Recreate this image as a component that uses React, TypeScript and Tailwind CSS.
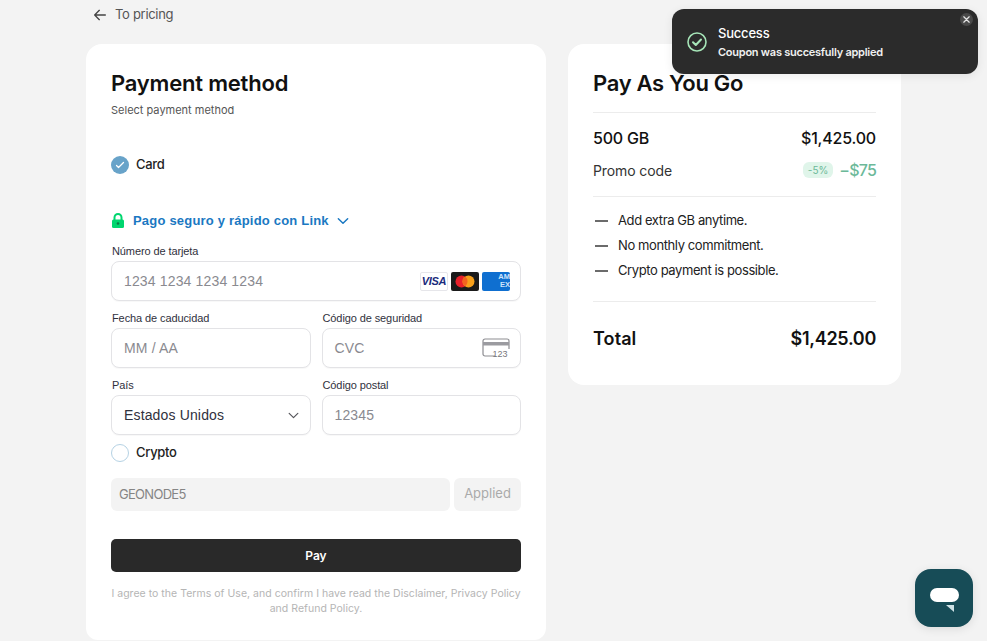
import React from "react";

const SANS = "font-['Inter','Noto_Sans',sans-serif]";
const ARIAL = "font-['Liberation_Sans',Arial,sans-serif]";

function Label({ children }: { children: React.ReactNode }) {
  return <div className={`${ARIAL} text-[11px] leading-[13px] text-[#30313d] mb-[3px] pl-[1px] tracking-[-0.1px]`}>{children}</div>;
}

function Field({ label, placeholder, children }: { label: string; placeholder: string; children?: React.ReactNode }) {
  return (
    <div className="flex-1 min-w-0">
      <Label>{label}</Label>
      <div className="h-[40px] rounded-[8px] border border-[#e3e3e6] bg-white flex items-center justify-between pl-[12px] pr-[11px] shadow-[0_1px_1px_rgba(0,0,0,0.03)]">
        <span className={`${ARIAL} text-[14px] text-[#8a8a90] tracking-[0.15px]`}>{placeholder}</span>
        {children}
      </div>
    </div>
  );
}

function Dash({ children }: { children: React.ReactNode }) {
  return (
    <div className="flex items-center h-[25px]">
      <span className="w-[13px] h-[2px] bg-[#6b6b6b] mr-[10px] ml-[2px]" />
      <span className="text-[13px] tracking-[-0.4px] text-[#222]">{children}</span>
    </div>
  );
}

export default function App() {
  return (
    <div className={`${SANS} relative w-[987px] h-[641px] overflow-hidden bg-[#f3f3f3]`}>
      <div className="pl-[86px] flex gap-[22px] items-start">
        <div className="w-[460px]">
          <div className="h-[44px] pb-[14px] flex items-center pl-[6px] gap-[7px]">
            <svg width="16" height="16" viewBox="0 0 24 24" fill="none" stroke="#444" strokeWidth="2" strokeLinecap="round" strokeLinejoin="round">
              <path d="M20 12H4M11 5l-7 7 7 7" />
            </svg>
            <span className="text-[13px] tracking-[-0.3px] text-[#555]">To pricing</span>
          </div>

          <div className="h-[596px] rounded-t-[16px] rounded-b-[12px] bg-white px-[25px] pt-[25px]">
            <h1 className="text-[22px] leading-[28px] font-semibold tracking-[-0.2px] text-[#111]">Payment method</h1>
            <p className="mt-[6px] text-[11px] leading-[14px] text-[#555]">Select payment method</p>

            <div className="mt-[38px] flex items-center gap-[7px] h-[20px]">
              <span className="w-[18px] h-[18px] rounded-full bg-[#68a3c9] flex items-center justify-center">
                <svg width="12" height="12" viewBox="0 0 24 24" fill="none" stroke="#fff" strokeWidth="2.5" strokeLinecap="round" strokeLinejoin="round">
                  <path d="M5 13l4 4L19 7" />
                </svg>
              </span>
              <span className="text-[13px] font-medium tracking-[-0.3px] text-[#222]">Card</span>
            </div>

            <div className="mt-[36px] flex items-center h-[20px]">
              <svg width="14" height="16" viewBox="0 0 14 16" className="mr-[8px]">
                <path d="M3.5 7V4.5a3.5 3.5 0 0 1 7 0V7" fill="none" stroke="#00d66f" strokeWidth="2" />
                <rect x="1" y="6.5" width="12" height="8.5" rx="1.5" fill="#00d66f" />
                <circle cx="7" cy="10.5" r="1.3" fill="#0a7a45" />
              </svg>
              <span className={`${ARIAL} text-[13px] font-bold tracking-[0.2px] text-[#1a78c2]`}>Pago seguro y rápido con Link</span>
              <svg width="14" height="14" viewBox="0 0 24 24" fill="none" stroke="#1a78c2" strokeWidth="2.5" strokeLinecap="round" strokeLinejoin="round" className="ml-[7px]">
                <path d="M4 8l8 8 8-8" />
              </svg>
            </div>

            <div className="mt-[14px]">
              <Field label="Número de tarjeta" placeholder="1234 1234 1234 1234">
                <span className="flex items-center gap-[3px] -mr-[1px]">
                  <span className={`${ARIAL} w-[28px] h-[19px] rounded-[2px] bg-white border border-[#e6e6ea] flex items-center justify-center text-[11px] italic font-bold tracking-[-0.3px] text-[#1a2b7c]`}>VISA</span>
                  <svg width="28" height="19" viewBox="0 0 28 19">
                    <rect width="28" height="19" rx="2" fill="#1a1a1a" />
                    <circle cx="10.5" cy="9.5" r="6" fill="#e8202a" />
                    <circle cx="17.5" cy="9.5" r="6" fill="#f7a01b" />
                    <path d="M14 4.6a6 6 0 0 1 0 9.8a6 6 0 0 1 0-9.8z" fill="#f2641f" />
                  </svg>
                  <span className={`${ARIAL} w-[28px] h-[19px] rounded-[2px] bg-[#0f6fd0] flex flex-col items-end justify-center text-[7.5px] leading-[8px] font-bold text-[#cfe4fb] overflow-hidden`}>
                    <span className="whitespace-nowrap">AM</span>
                    <span className="whitespace-nowrap">EX</span>
                  </span>
                </span>
              </Field>
            </div>

            <div className="mt-[11px] flex gap-[11px]">
              <Field label="Fecha de caducidad" placeholder="MM / AA" />
              <Field label="Código de seguridad" placeholder="CVC">
                <svg width="28" height="20" viewBox="0 0 28 20" fill="none" className="-mr-[1px]">
                  <path d="M13 18H3a2 2 0 0 1-2-2V3a2 2 0 0 1 2-2h22a2 2 0 0 1 2 2v8" stroke="#8d8d92" strokeWidth="1.2" />
                  <rect x="1" y="4" width="26" height="3.5" fill="#9b9ba0" />
                  <text x="10.5" y="19" fontSize="9" fontFamily="Liberation Sans" fill="#77777c">123</text>
                </svg>
              </Field>
            </div>

            <div className="mt-[11px] flex gap-[11px]">
              <div className="flex-1 min-w-0">
                <Label>País</Label>
                <div className="h-[40px] rounded-[8px] border border-[#e3e3e6] bg-white flex items-center justify-between pl-[12px] pr-[10px] shadow-[0_1px_1px_rgba(0,0,0,0.03)]">
                  <span className={`${ARIAL} text-[14px] text-[#30313d] tracking-[0.15px]`}>Estados Unidos</span>
                  <svg width="13" height="13" viewBox="0 0 24 24" fill="none" stroke="#55555a" strokeWidth="2.2" strokeLinecap="round" strokeLinejoin="round">
                    <path d="M4 8l8 8 8-8" />
                  </svg>
                </div>
              </div>
              <Field label="Código postal" placeholder="12345" />
            </div>

            <div className="mt-[8px] flex items-center gap-[7px] h-[20px]">
              <span className="w-[18px] h-[18px] rounded-full border border-[#b5d2e4] bg-white" />
              <span className="text-[13px] font-medium tracking-[-0.3px] text-[#222]">Crypto</span>
            </div>

            <div className="mt-[15px] flex gap-[4px]">
              <div className="flex-1 h-[33px] rounded-[6px] bg-[#f3f3f3] flex items-center pl-[8px] text-[13px] tracking-[-0.7px] text-[#858585]">GEONODE5</div>
              <div className="w-[67px] h-[33px] rounded-[6px] bg-[#f3f3f3] flex items-center justify-center pb-[2px] text-[13px] text-[#aaa]">Applied</div>
            </div>

            <button className="mt-[28px] w-full h-[33px] rounded-[5px] bg-[#292929] text-white text-[12px] font-semibold">Pay</button>

            <p className="mt-[14px] text-center text-[10.5px] leading-[15px] tracking-[0.03px] text-[#b5b5b5]">
              I agree to the Terms of Use, and confirm I have read the Disclaimer, Privacy Policy
              <br />
              and Refund Policy.
            </p>
          </div>
        </div>

        <div className="mt-[44px] w-[333px] h-[341px] rounded-[16px] bg-white px-[25px] pt-[25px]">
          <h2 className="text-[22px] leading-[28px] font-semibold tracking-[-0.3px] text-[#111]">Pay As You Go</h2>
          <div className="mt-[15px] border-t border-[#ececec]" />
          <div className="mt-[13px] flex justify-between items-center h-[24px] text-[16px] font-medium tracking-[-0.2px] text-[#111]">
            <span>500 GB</span>
            <span>$1,425.00</span>
          </div>
          <div className="mt-[8px] flex justify-between items-center h-[24px]">
            <span className="text-[14px] tracking-[-0.1px] text-[#333]">Promo code</span>
            <span className="flex items-center gap-[6px]">
              <span className="h-[16px] px-[5px] rounded-[6px] bg-[#e0f5ea] text-[10px] leading-[16px] text-[#6cb999]">-5%</span>
              <span className="text-[16px] font-medium tracking-[-0.8px] text-[#6cb999]">−$75</span>
            </span>
          </div>
          <div className="mt-[14px] border-t border-[#ececec]" />
          <div className="mt-[11px]">
            <Dash>Add extra GB anytime.</Dash>
            <Dash>No monthly commitment.</Dash>
            <Dash>Crypto payment is possible.</Dash>
          </div>
          <div className="mt-[18px] border-t border-[#ececec]" />
          <div className="mt-[23px] flex justify-between items-center h-[26px] text-[18px] font-semibold tracking-[-0.3px] text-[#111]">
            <span className="tracking-[0.1px]">Total</span>
            <span>$1,425.00</span>
          </div>
        </div>
      </div>

      <div className="absolute left-[672px] top-[9px] w-[306px] h-[65px] rounded-[12px] bg-[#2b2b2b] shadow-[0_2px_10px_rgba(0,0,0,0.08)] flex items-center pl-[15px]">
        <svg width="20" height="20" viewBox="0 0 20 20" fill="none">
          <circle cx="10" cy="10" r="9" stroke="#a6e5b8" strokeWidth="1.6" />
          <path d="M6 10.2l2.8 2.8L14 7.5" stroke="#a6e5b8" strokeWidth="2" strokeLinecap="round" strokeLinejoin="round" />
        </svg>
        <div className="ml-[11px]">
          <div className="text-[13px] leading-[18px] font-medium text-white tracking-[-0.2px]">Success</div>
          <div className="mt-[2px] text-[11px] leading-[16px] font-semibold text-[#f0f0f0] tracking-[-0.25px]">Coupon was succesfully applied</div>
        </div>
        <span className="absolute right-[5px] top-[4px] w-[13px] h-[13px] rounded-full bg-[#4a4a4a] flex items-center justify-center">
          <svg width="9" height="9" viewBox="0 0 10 10" stroke="#e5e5e5" strokeWidth="1.4" strokeLinecap="round">
            <path d="M2 2l6 6M8 2l-6 6" />
          </svg>
        </span>
      </div>

      <div className="absolute left-[915px] top-[569px] w-[58px] h-[58px] rounded-[16px] bg-[#174c57] shadow-[0_2px_10px_rgba(0,0,0,0.1)] flex items-center justify-center">
        <svg width="29" height="28" viewBox="0 0 29 28">
          <rect x="0" y="4" width="29" height="14" rx="7" fill="#fff" />
          <path d="M16 21h8v7z" fill="#cfe2e6" />
        </svg>
      </div>
    </div>
  );
}
